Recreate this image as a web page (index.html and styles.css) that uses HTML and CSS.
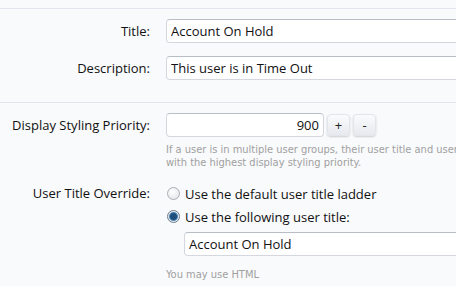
FILE: index.html
```html
<!DOCTYPE html>
<html lang="en">
<head>
    <meta charset="UTF-8">
    <title>User Group Options</title>
    <link rel="stylesheet" href="styles.css">
</head>
<body>
    <!-- 상단 헤더 (잘림) -->
    <div class="section-head">
        <h3>Display Options</h3>
    </div>

    <div class="form-section">
        <div class="ctrl-row">
            <label class="ctrl-label" for="title">Title:</label>
            <div class="ctrl-unit">
                <input type="text" id="title" class="text-ctrl" value="Account On Hold">
            </div>
        </div>
        <div class="ctrl-row">
            <label class="ctrl-label" for="description">Description:</label>
            <div class="ctrl-unit">
                <input type="text" id="description" class="text-ctrl" value="This user is in Time Out">
            </div>
        </div>
    </div>

    <div class="form-section">
        <div class="ctrl-row">
            <label class="ctrl-label" for="priority">Display Styling Priority:</label>
            <div class="ctrl-unit">
                <div class="spin-box">
                    <input type="text" id="priority" class="text-ctrl number" value="900">
                    <button type="button" class="spin-btn">+</button>
                    <button type="button" class="spin-btn">-</button>
                </div>
                <p class="explain">If a user is in multiple user groups, their user title and user styling will be taken from the group<br>with the highest display styling priority.</p>
            </div>
        </div>

        <div class="ctrl-row radio-row">
            <span class="ctrl-label">User Title Override:</span>
            <div class="ctrl-unit">
                <label class="radio-item">
                    <span class="radio"></span>Use the default user title ladder
                </label>
                <label class="radio-item">
                    <span class="radio checked"></span>Use the following user title:
                </label>
                <div class="dependent">
                    <input type="text" class="text-ctrl" value="Account On Hold">
                    <p class="explain">You may use HTML</p>
                </div>
            </div>
        </div>
    </div>
</body>
</html>
```

FILE: styles.css
```css
body {
    margin: 0;
    background-color: #f9fafc;
    font-family: "Open Sans", "Liberation Sans", sans-serif;
    font-size: 13px;
    color: #111;
    overflow: hidden;
}

/* 헤더 */
.section-head {
    height: 8px;
    overflow: hidden;
    border-bottom: 1px solid #e1e6ee;
}

.section-head h3 {
    margin: -22px 0 0 75px;
    font-size: 16px;
    font-weight: bold;
}

/* 폼 영역 */
.form-section {
    padding: 10px 0 22px;
    border-bottom: 1px solid #e1e6ee;
}

.form-section:last-child {
    border-bottom: none;
}

.ctrl-row {
    display: flex;
    gap: 16px;
    margin-bottom: 13px;
}

.ctrl-row:last-child {
    margin-bottom: 0;
}

.ctrl-label {
    flex: 0 0 150px;
    text-align: right;
    line-height: 24px;
}

.ctrl-unit {
    flex: 1;
    min-width: 0;
}

.text-ctrl {
    box-sizing: border-box;
    width: 330px;
    height: 24px;
    padding: 0 4px;
    font: inherit;
    color: #111;
    background: #fff;
    border: 1px solid #d4d8de;
    border-top-color: #b9bec6;
    border-radius: 4px;
}

/* 숫자 입력 */
.spin-box {
    display: flex;
    align-items: center;
    gap: 3px;
}

.text-ctrl.number {
    width: 158px;
    text-align: right;
}

.spin-btn {
    width: 23px;
    height: 22px;
    padding: 0;
    font: inherit;
    border: 1px solid #e2e5ea;
    border-radius: 4px;
    background: linear-gradient(#fafbfc, #e6e9ee);
    box-shadow: 0 1px 2px rgba(0, 0, 0, 0.18);
    color: #222;
}

.explain {
    margin: 6px 0 0;
    font-family: "DejaVu Sans Condensed", "DejaVu Sans", sans-serif;
    font-size: 11px;
    line-height: 13px;
    color: #a0a0a0;
    white-space: nowrap;
}

/* 라디오 */
.radio-row {
    margin-top: 11px;
}

.radio-row .ctrl-label {
    line-height: 23px;
}

.radio-item {
    display: flex;
    align-items: center;
    height: 23px;
}

.radio {
    box-sizing: border-box;
    width: 13px;
    height: 13px;
    margin: 0 5px 0 1px;
    border-radius: 50%;
    border: 1px solid #a9adb3;
    background: radial-gradient(circle at 40% 35%, #fff, #dfe1e4);
}

.radio.checked {
    border-color: #6d7c8c;
    background: radial-gradient(circle at 50% 50%, #1f4f7a 0 3px, #4c86b8 4px, #e7ebef 5px);
}

.dependent {
    margin: 4px 0 0 18px;
}

.dependent .explain {
    margin: 12px 0 0 -18px;
}
```
